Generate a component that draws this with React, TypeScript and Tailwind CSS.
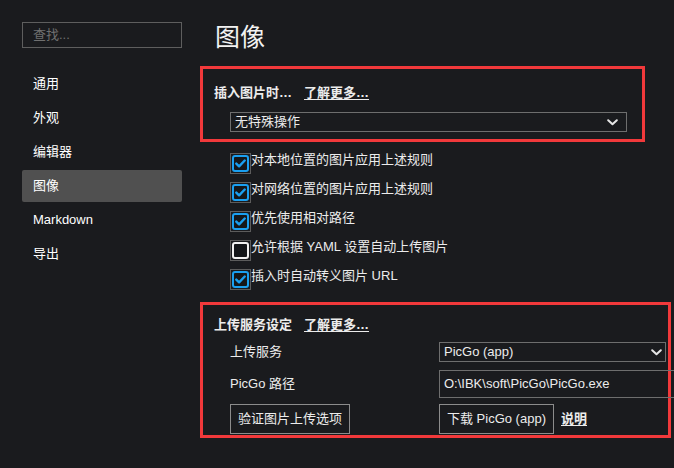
import React from 'react'

const font = { fontFamily: '"Liberation Sans", "Noto Sans CJK SC", sans-serif' }

function Chevron() {
  return (
    <svg width="11" height="7" viewBox="0 0 11 7" fill="none">
      <path d="M1.2 1.2 L5.5 5.3 L9.8 1.2" stroke="#e6e6e6" strokeWidth="2" strokeLinecap="round" strokeLinejoin="round" />
    </svg>
  )
}

function Check({ checked, label }: { checked: boolean; label: string }) {
  return (
    <div className="flex h-[29px] items-start">
      <div className="h-[21px] w-[21px] shrink-0 border border-[#5c5c5c] p-[1px]">
        <div
          className={
            checked
              ? 'flex h-full w-full items-center justify-center rounded-[3px] border-2 border-[#1a9ff0] bg-[#15171a]'
              : 'flex h-full w-full items-center justify-center rounded-[3px] border-2 border-[#f2f2f2] bg-[#15171a]'
          }
        >
          {checked && (
            <svg width="11" height="9" viewBox="0 0 11 9" fill="none">
              <path d="M1.3 4.6 L4.1 7.3 L9.7 1.5" stroke="#1a9ff0" strokeWidth="2.4" strokeLinecap="round" strokeLinejoin="round" />
            </svg>
          )}
        </div>
      </div>
      <span className="-mt-[1px] text-[13px] leading-[16px] text-[#ececec]">{label}</span>
    </div>
  )
}

export default function App() {
  const nav = ['通用', '外观', '编辑器', '图像', 'Markdown', '导出']
  return (
    <div className="flex h-[468px] w-[674px] overflow-hidden bg-[#1a1b1e] text-[#ececec]" style={font}>
      <aside className="w-[200px] shrink-0 pl-[22px] pt-[22px]">
        <div className="flex h-[26px] w-[160px] items-center border border-[#5e5e5e] px-[10px] text-[13px] text-[#707070]">
          查找...
        </div>
        <nav className="mt-[20px] flex w-[160px] flex-col gap-[2px]">
          {nav.map((n) => (
            <div
              key={n}
              className={
                n === '图像'
                  ? 'flex h-[32px] items-center rounded-[2px] bg-[#505050] pl-[11px] text-[13px] text-white'
                  : 'flex h-[32px] items-center pl-[11px] text-[13px] text-white'
              }
            >
              {n}
            </div>
          ))}
        </nav>
      </aside>

      <main className="flex-1 pt-[22px]">
        <h1 className="ml-[15px] h-[44px] text-[25px] leading-[30px] text-[#f2f2f2]">图像</h1>

        <section className="h-[76px] w-[445px] border-[3px] border-[#f2393b] pl-[11px] pt-[16px]">
          <div className="flex items-center text-[13px] font-bold leading-[16px]">
            <span>插入图片时…</span>
            <span className="ml-[12px] underline underline-offset-2">了解更多…</span>
          </div>
          <div className="ml-[16px] mt-[11px] flex h-[20px] w-[397px] items-center justify-between border border-[#6e6e6e] pl-[4px] pr-[8px] text-[13px]">
            <span>无特殊操作</span>
            <Chevron />
          </div>
        </section>

        <div className="ml-[30px] mt-[11px] flex flex-col">
          <Check checked label="对本地位置的图片应用上述规则" />
          <Check checked label="对网络位置的图片应用上述规则" />
          <Check checked label="优先使用相对路径" />
          <Check checked={false} label="允许根据 YAML 设置自动上传图片" />
          <Check checked label="插入时自动转义图片 URL" />
        </div>

        <section className="mt-[4px] h-[136px] w-[471px] border-[3px] border-[#f2393b] pl-[11px] pt-[12px]">
          <div className="flex items-center text-[13px] font-bold leading-[16px]">
            <span>上传服务设定</span>
            <span className="ml-[12px] underline underline-offset-2">了解更多…</span>
          </div>
          <div className="ml-[16px] mt-[9px] grid grid-cols-[209px_1fr] items-center gap-y-[8px] text-[13px]">
            <span>上传服务</span>
            <div className="flex h-[20px] w-[227px] items-center justify-between border border-[#6e6e6e] pl-[4px] pr-[3px]">
              <span>PicGo (app)</span>
              <Chevron />
            </div>
            <span>PicGo 路径</span>
            <div className="flex h-[28px] w-[240px] items-center border border-[#6e6e6e] pl-[4px]">
              O:\IBK\soft\PicGo\PicGo.exe
            </div>
          </div>
          <div className="ml-[16px] mt-[6px] grid grid-cols-[209px_1fr] items-center text-[13px]">
            <div className="flex h-[30px] w-[120px] items-center justify-center border border-[#8c8c8c]">
              验证图片上传选项
            </div>
            <div className="flex items-center">
              <div className="flex h-[30px] w-[115px] items-center justify-center border border-[#8c8c8c]">
                下载 PicGo (app)
              </div>
              <span className="ml-[7px] font-bold underline underline-offset-2">说明</span>
            </div>
          </div>
        </section>
      </main>
    </div>
  )
}
